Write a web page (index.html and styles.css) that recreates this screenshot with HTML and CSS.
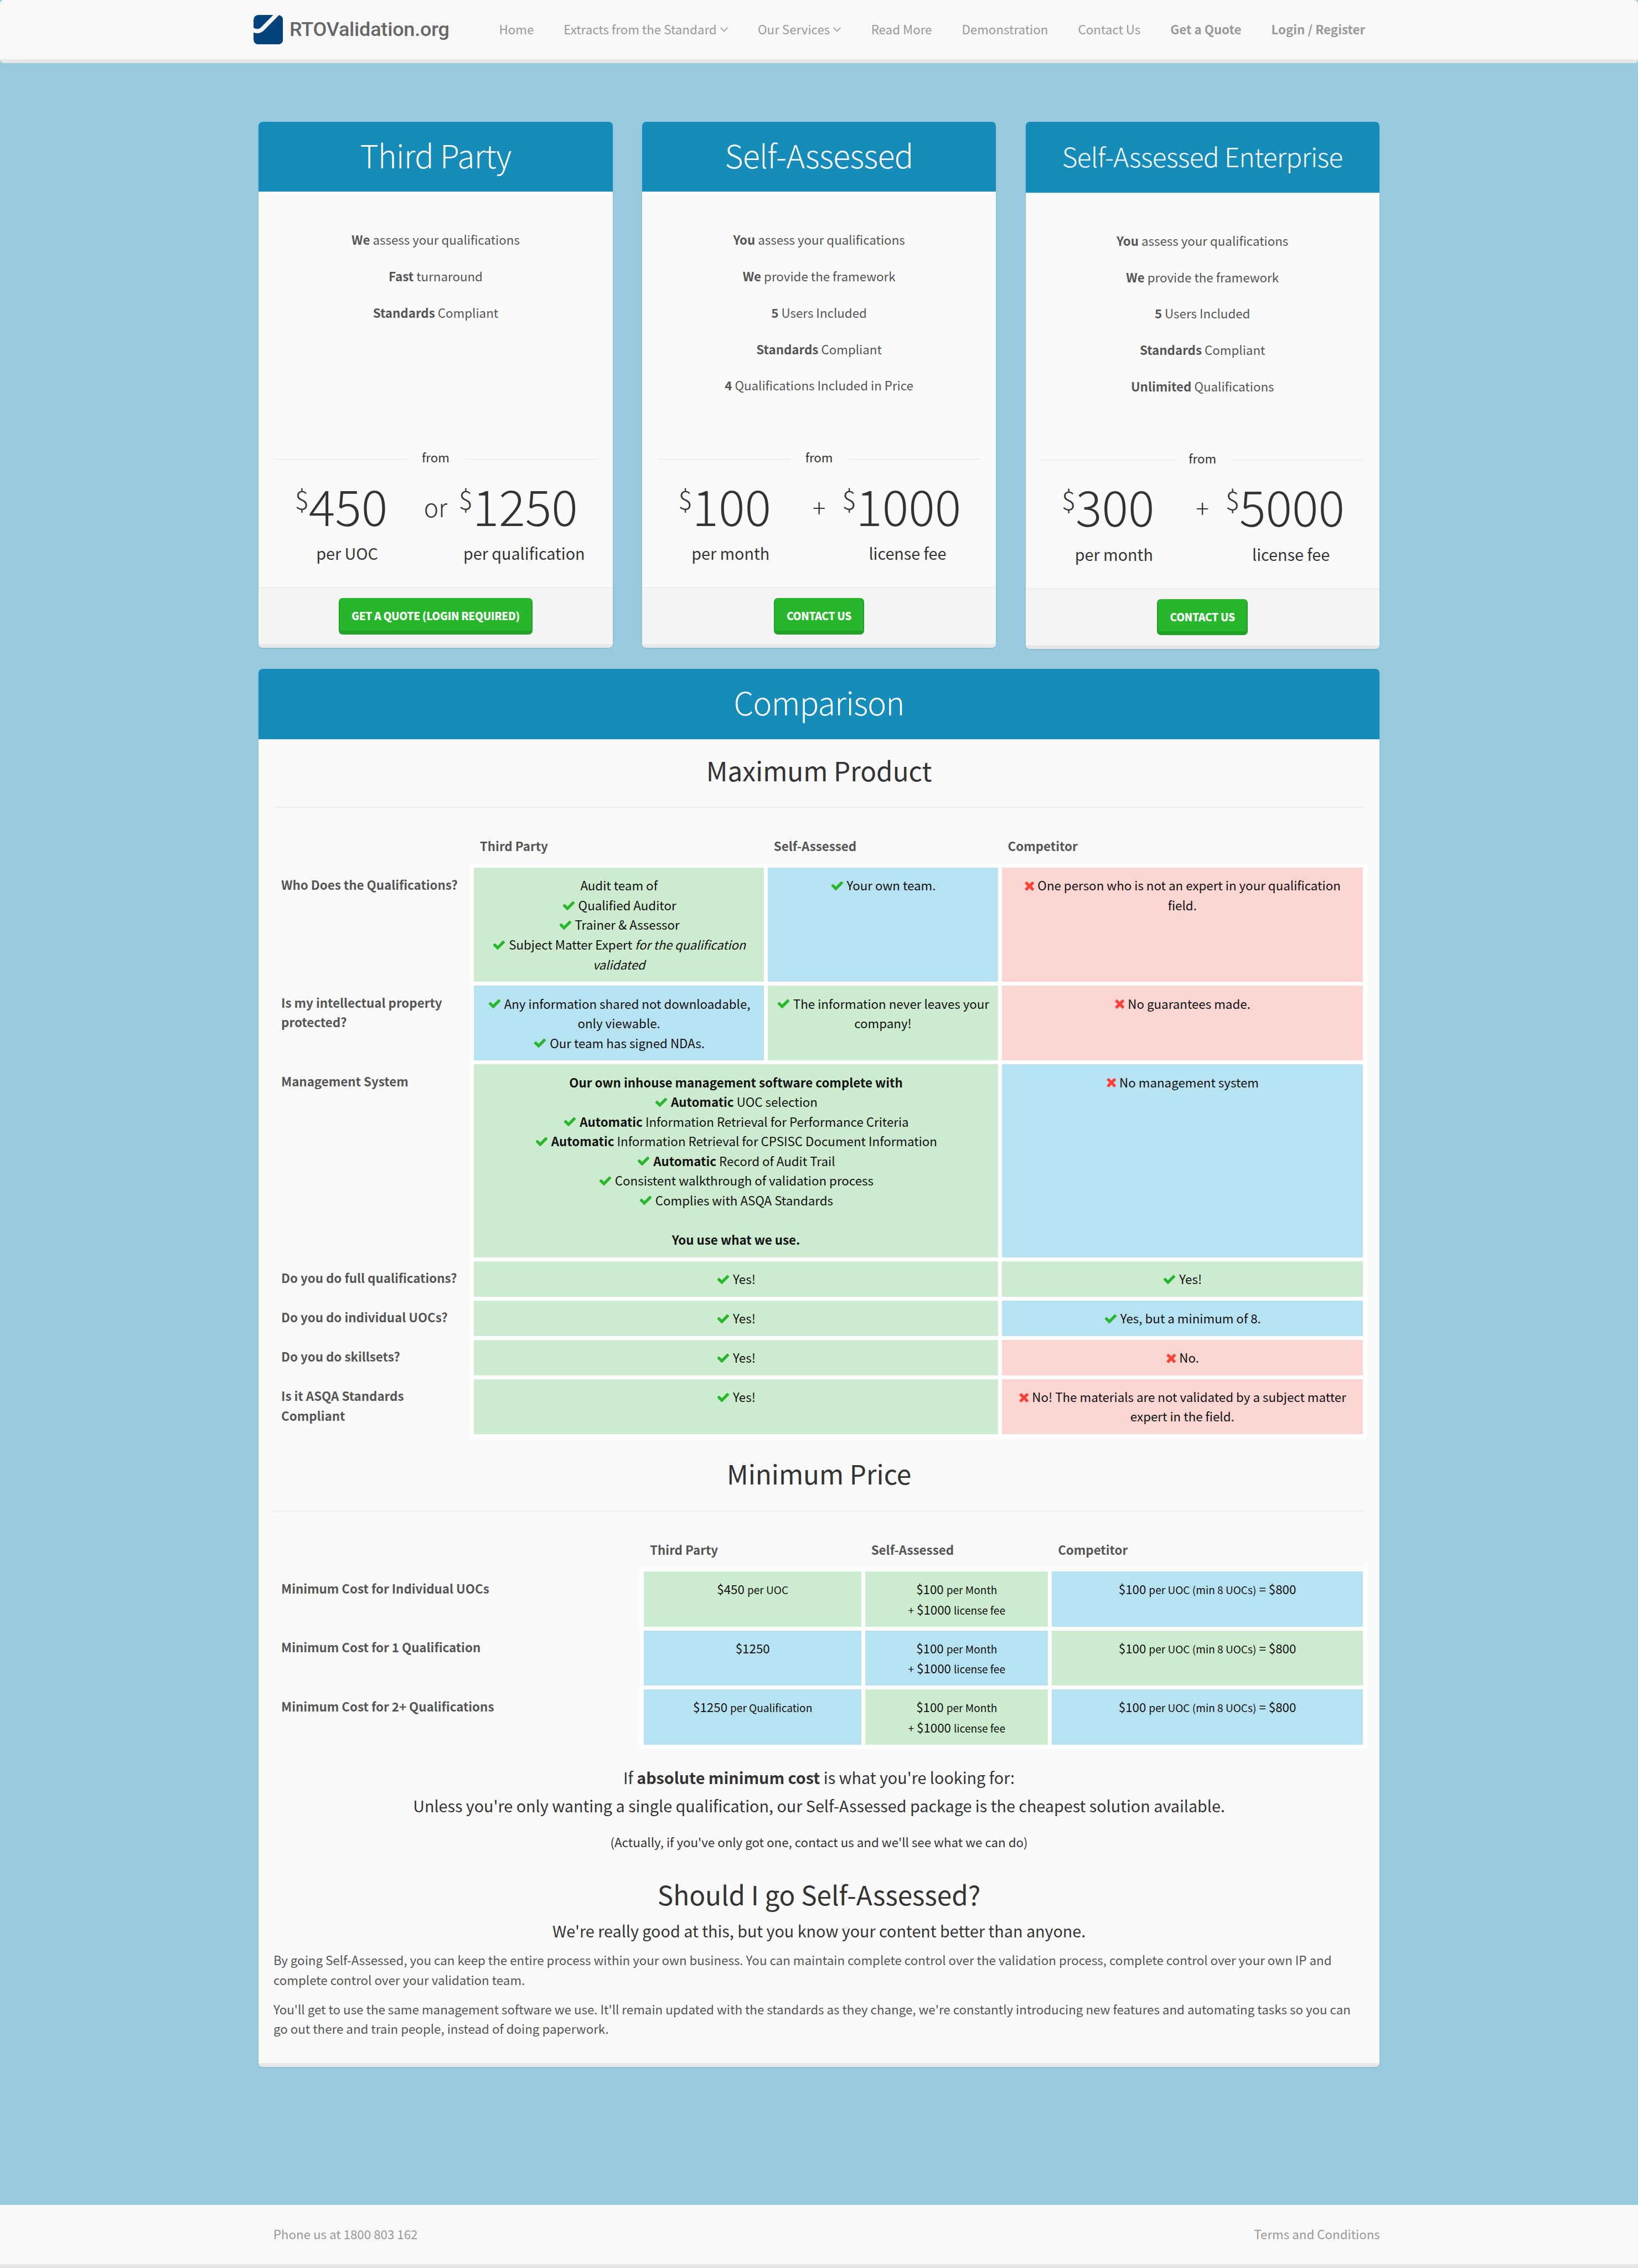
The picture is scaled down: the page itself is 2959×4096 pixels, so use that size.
FILE: index.html
```html
<!DOCTYPE html>
<html lang="en">
<head>
<meta charset="utf-8">
<title>RTOValidation.org</title>
<link rel="stylesheet" href="styles.css">
</head>
<body>
<svg class="defs" aria-hidden="true">
  <symbol id="check" viewBox="0 0 1792 1792"><path d="M1671 566q0 40-28 68l-724 724-136 136q-28 28-68 28t-68-28l-136-136-362-362q-28-28-28-68t28-68l136-136q28-28 68-28t68 28l294 295 656-657q28-28 68-28t68 28l136 136q28 28 28 68z"/></symbol>
  <symbol id="times" viewBox="192 0 1408 1792"><path d="M1490 1322q0 40-28 68l-136 136q-28 28-68 28t-68-28l-294-294-294 294q-28 28-68 28t-68-28l-136-136q-28-28-28-68t28-68l294-294-294-294q-28-28-28-68t28-68l136-136q28-28 68-28t68 28l294 294 294-294q28-28 68-28t68 28l136 136q28 28 28 68t-28 68l-294 294 294 294q28 28 28 68z"/></symbol>
  <symbol id="caret" viewBox="0 0 16 10"><path d="M1 1l7 7.5L15 1" fill="none" stroke="currentColor" stroke-width="1.8"/></symbol>
</svg>

<header class="navbar">
  <a class="brand">
    <svg class="logo" viewBox="0 0 60 60"><rect width="60" height="60" rx="10" fill="#04437b"/><path d="M-3 29.500Q9 36.500 17.500 29L49-3" fill="none" stroke="#f8f8f8" stroke-width="8.500"/></svg>
    <span class="wordmark">RTOValidation.org</span>
  </a>
  <nav class="menu">
    <a>Home</a>
    <a>Extracts from the Standard<svg class="caret"><use href="#caret"/></svg></a>
    <a>Our Services<svg class="caret"><use href="#caret"/></svg></a>
    <a>Read More</a>
    <a>Demonstration</a>
    <a>Contact Us</a>
    <a><b>Get a Quote</b></a>
    <a><b>Login / Register</b></a>
  </nav>
</header>

<main class="container">
  <section class="plans">
    <article class="panel plan">
      <h1 class="panel-title">Third Party</h1>
      <ul class="features">
        <li><b>We</b> assess your qualifications</li>
        <li><b>Fast</b> turnaround</li>
        <li><b>Standards</b> Compliant</li>
      </ul>
      <div class="from">from</div>
      <div class="prices">
        <div class="price left"><span class="cur">$</span>450</div>
        <div class="joiner">or</div>
        <div class="price right"><span class="cur">$</span>1250</div>
        <div class="unit left">per UOC</div>
        <div class="unit right">per qualification</div>
      </div>
      <footer class="panel-footer"><a class="btn">Get a Quote (Login Required)</a></footer>
    </article>
    <article class="panel plan">
      <h1 class="panel-title">Self-Assessed</h1>
      <ul class="features">
        <li><b>You</b> assess your qualifications</li>
        <li><b>We</b> provide the framework</li>
        <li><b>5</b> Users Included</li>
        <li><b>Standards</b> Compliant</li>
        <li><b>4</b> Qualifications Included in Price</li>
      </ul>
      <div class="from">from</div>
      <div class="prices">
        <div class="price left"><span class="cur">$</span>100</div>
        <div class="joiner">+</div>
        <div class="price right"><span class="cur">$</span>1000</div>
        <div class="unit left">per month</div>
        <div class="unit right">license fee</div>
      </div>
      <footer class="panel-footer"><a class="btn">Contact Us</a></footer>
    </article>
    <article class="panel plan">
      <h2 class="panel-title compact">Self-Assessed Enterprise</h2>
      <ul class="features">
        <li><b>You</b> assess your qualifications</li>
        <li><b>We</b> provide the framework</li>
        <li><b>5</b> Users Included</li>
        <li><b>Standards</b> Compliant</li>
        <li><b>Unlimited</b> Qualifications</li>
      </ul>
      <div class="from">from</div>
      <div class="prices">
        <div class="price left"><span class="cur">$</span>300</div>
        <div class="joiner">+</div>
        <div class="price right"><span class="cur">$</span>5000</div>
        <div class="unit left">per month</div>
        <div class="unit right">license fee</div>
      </div>
      <footer class="panel-footer"><a class="btn">Contact Us</a></footer>
    </article>
  </section>

  <section class="panel comparison">
    <h1 class="panel-title ruled">Comparison</h1>
    <div class="panel-body">
      <h2 class="heading">Maximum Product</h2>
      <hr>
      <table class="compare product">
        <colgroup><col class="c1"><col class="c2"><col class="c3"><col class="c4"></colgroup>
        <tr class="lines-1"><th></th><th>Third Party</th><th>Self-Assessed</th><th>Competitor</th></tr>
        <tr class="lines-5">
          <th>Who Does the Qualifications?</th>
          <td class="good">Audit team of<br><svg class="ok"><use href="#check"/></svg> Qualified Auditor<br><svg class="ok"><use href="#check"/></svg> Trainer &amp; Assessor<br><svg class="ok"><use href="#check"/></svg> Subject Matter Expert <i>for the qualification<br>validated</i></td>
          <td class="fair"><svg class="ok"><use href="#check"/></svg> Your own team.</td>
          <td class="poor"><svg class="no"><use href="#times"/></svg> One person who is not an expert in your qualification<br>field.</td>
        </tr>
        <tr class="lines-3">
          <th>Is my intellectual property<br>protected?</th>
          <td class="fair"><svg class="ok"><use href="#check"/></svg> Any information shared not downloadable,<br>only viewable.<br><svg class="ok"><use href="#check"/></svg> Our team has signed NDAs.</td>
          <td class="good"><svg class="ok"><use href="#check"/></svg> The information never leaves your<br>company!</td>
          <td class="poor"><svg class="no"><use href="#times"/></svg> No guarantees made.</td>
        </tr>
        <tr class="lines-9">
          <th>Management System</th>
          <td class="good" colspan="2"><b>Our own inhouse management software complete with</b><br><svg class="ok"><use href="#check"/></svg> <b>Automatic</b> UOC selection<br><svg class="ok"><use href="#check"/></svg> <b>Automatic</b> Information Retrieval for Performance Criteria<br><svg class="ok"><use href="#check"/></svg> <b>Automatic</b> Information Retrieval for CPSISC Document Information<br><svg class="ok"><use href="#check"/></svg> <b>Automatic</b> Record of Audit Trail<br><svg class="ok"><use href="#check"/></svg> Consistent walkthrough of validation process<br><svg class="ok"><use href="#check"/></svg> Complies with ASQA Standards<br><br><b>You use what we use.</b></td>
          <td class="fair"><svg class="no"><use href="#times"/></svg> No management system</td>
        </tr>
        <tr class="lines-1">
          <th>Do you do full qualifications?</th>
          <td class="good" colspan="2"><svg class="ok"><use href="#check"/></svg> Yes!</td>
          <td class="good"><svg class="ok"><use href="#check"/></svg> Yes!</td>
        </tr>
        <tr class="lines-1">
          <th>Do you do individual UOCs?</th>
          <td class="good" colspan="2"><svg class="ok"><use href="#check"/></svg> Yes!</td>
          <td class="fair"><svg class="ok"><use href="#check"/></svg> Yes, but a minimum of 8.</td>
        </tr>
        <tr class="lines-1">
          <th>Do you do skillsets?</th>
          <td class="good" colspan="2"><svg class="ok"><use href="#check"/></svg> Yes!</td>
          <td class="poor"><svg class="no"><use href="#times"/></svg> No.</td>
        </tr>
        <tr class="lines-2">
          <th>Is it ASQA Standards<br>Compliant</th>
          <td class="good" colspan="2"><svg class="ok"><use href="#check"/></svg> Yes!</td>
          <td class="poor"><svg class="no"><use href="#times"/></svg> No! The materials are not validated by a subject matter<br>expert in the field.</td>
        </tr>
      </table>

      <h2 class="heading second">Minimum Price</h2>
      <hr>
      <table class="compare price-table">
        <colgroup><col class="c1"><col class="c2"><col class="c3"><col class="c4"></colgroup>
        <tr class="lines-1"><th></th><th>Third Party</th><th>Self-Assessed</th><th>Competitor</th></tr>
        <tr class="lines-2">
          <th>Minimum Cost for Individual UOCs</th>
          <td class="good">$450 <small>per UOC</small></td>
          <td class="good">$100 <small>per Month</small><br><small>+</small> $1000 <small>license fee</small></td>
          <td class="fair">$100 <small>per UOC (min 8 UOCs)</small> = $800</td>
        </tr>
        <tr class="lines-2">
          <th>Minimum Cost for 1 Qualification</th>
          <td class="fair">$1250</td>
          <td class="fair">$100 <small>per Month</small><br><small>+</small> $1000 <small>license fee</small></td>
          <td class="good">$100 <small>per UOC (min 8 UOCs)</small> = $800</td>
        </tr>
        <tr class="lines-2">
          <th>Minimum Cost for 2+ Qualifications</th>
          <td class="fair">$1250 <small>per Qualification</small></td>
          <td class="good">$100 <small>per Month</small><br><small>+</small> $1000 <small>license fee</small></td>
          <td class="fair">$100 <small>per UOC (min 8 UOCs)</small> = $800</td>
        </tr>
      </table>

      <p class="lead">If <b>absolute minimum cost</b> is what you're looking for:<br>Unless you're only wanting a single qualification, our Self-Assessed package is the cheapest solution available.</p>
      <p class="aside">(Actually, if you've only got one, contact us and we'll see what we can do)</p>
      <h2 class="heading third">Should I go Self-Assessed?</h2>
      <h4 class="sub">We're really good at this, but you know your content better than anyone.</h4>
      <p class="text">By going Self-Assessed, you can keep the entire process within your own business. You can maintain complete control over the validation process, complete control over your own IP and<br>complete control over your validation team.</p>
      <p class="text">You'll get to use the same management software we use. It'll remain updated with the standards as they change, we're constantly introducing new features and automating tasks so you can<br>go out there and train people, instead of doing paperwork.</p>
    </div>
  </section>
</main>

<footer class="page-footer">
  <span>Phone us at 1800 803 162</span>
  <a>Terms and Conditions</a>
</footer>
</body>
</html>
```
FILE: styles.css
```css
html { font-size: 88.8px; }
* { box-sizing: border-box; }
body {
  margin: 0;
  min-height: 4096px;
  display: flex;
  flex-direction: column;
  background: #98cbe0;
  color: #555;
  font-family: "Noto Sans CJK SC", "Open Sans", sans-serif;
  font-size: .2515rem;
  line-height: .4rem;
  white-space: nowrap;
}
h1, h2, h4, p, ul { margin: 0; padding: 0; font-weight: 400; }
b { font-weight: 700; }
.defs { display: none; }

.navbar {
  display: flex;
  height: 1.28rem;
  padding: 0 5.55rem 0 5.16rem;
  background: #f8f8f8;
  border-bottom: .08rem solid #e7e7e7;
  border-radius: .08rem;
}
.brand { display: flex; padding-top: .3rem; }
.logo { width: .6rem; height: .6rem; }
.wordmark {
  margin-left: .13rem;
  color: #666;
  font: 500 .405rem/.6rem Roboto, sans-serif;
  letter-spacing: -.002rem;
}
.menu { display: flex; gap: .608rem; margin-left: auto; padding-top: .39rem; color: #999; }
.caret { width: .16rem; height: .1rem; margin-left: .07rem; vertical-align: .045rem; }

.container { width: 22.8rem; margin: 1.2rem 0 0 5.262rem; }
.plans { display: grid; grid-template-columns: repeat(3, 7.2rem); gap: .6rem; align-items: start; }
.panel {
  background: #fafafa;
  border-bottom: .08rem solid #e7e7e7;
  border-radius: .08rem;
  box-shadow: 0 1px 3px rgba(0, 0, 0, .12);
}
.panel-title {
  height: 1.42rem;
  background: #158cba;
  border-radius: .08rem .08rem 0 0;
  color: #fff;
  font-size: .645rem;
  font-weight: 300;
  letter-spacing: -.013em;
  line-height: 1.33rem;
  text-align: center;
}
.panel-title.compact { height: 1.46rem; font-size: .537rem; line-height: 1.39rem; border-bottom: .023rem solid #eee; }
.panel-title.ruled { height: 1.45rem; border-bottom: .023rem solid #eee; }
.features { height: 5.2rem; padding-top: .61rem; list-style: none; text-align: center; line-height: .74rem; }
.compact + .features { height: 5.18rem; padding-top: .585rem; }
.from { display: flex; gap: .29rem; margin: 0 .3rem; color: #333; }
.from::before, .from::after { content: ""; flex: 1; height: 2px; margin-top: .23rem; background: #eee; }
.prices {
  display: grid;
  grid-template-columns: 1fr 1fr;
  grid-template-rows: 1.37rem .89rem;
  margin-top: .18rem;
  color: #333;
  text-align: center;
}
.price { grid-row: 1; padding-right: .24rem; font-size: 1rem; font-weight: 300; line-height: 1.18rem; }
.cur { font-size: .53rem; line-height: 0; vertical-align: .34rem; }
.joiner { grid-area: 1 / 1 / 2 / 3; font-size: .5rem; font-weight: 300; line-height: 1.24rem; }
.unit { grid-row: 2; font-size: .3235rem; }
.left { grid-column: 1; }
.right { grid-column: 2; }
.panel-footer {
  height: 1.16rem;
  padding-top: .2rem;
  background: #f5f5f5;
  border-top: .023rem solid #eee;
  text-align: center;
}
.btn {
  display: inline-block;
  height: .74rem;
  padding: 0 .24rem;
  background: #28b62c;
  border: solid #23a127;
  border-width: 0 .023rem .08rem;
  border-radius: .08rem;
  color: #fff;
  font-size: .215rem;
  font-weight: 900;
  letter-spacing: -.004rem;
  line-height: .71rem;
  text-transform: uppercase;
}

.comparison { height: 28.43rem; margin-top: .41rem; }
.panel-body { padding: .275rem .3rem 0; }
.heading { color: #333; font-size: .537rem; line-height: .66rem; text-align: center; }
.heading.second { margin-top: .395rem; }
.heading.third { margin-top: .535rem; }
hr { height: 2px; margin: .42rem 0 .375rem; border: 0; background: #eee; }

.compare { width: 22.2rem; table-layout: fixed; border-collapse: collapse; }
.product .c1 { width: 4.04rem; }
.product .c2 { width: 5.98rem; }
.product .c3 { width: 4.76rem; }
.product .c4 { width: 7.42rem; }
.price-table .c1 { width: 7.5rem; }
.price-table .c2 { width: 4.5rem; }
.price-table .c3 { width: 3.8rem; }
.price-table .c4 { width: 6.4rem; }
.lines-1 { height: .8rem; }
.lines-2 { height: 1.2rem; }
.lines-3 { height: 1.6rem; }
.lines-5 { height: 2.4rem; }
.lines-9 { height: 4rem; }
.compare tr:nth-child(odd) { background: #f9f9f9; }
.compare th { padding: .18rem .16rem 0; text-align: left; vertical-align: top; font-weight: 700; }
.compare tr:first-child th { padding-top: .2rem; }
.compare td { padding: .16rem .1rem 0; border: .08rem solid #fff; color: #111; text-align: center; vertical-align: top; }
.compare i { font-size: .246rem; }
.compare small { font-size: .215rem; }
.good { background: #cdeccf; }
.fair { background: #b7e2f2; }
.poor { background: #fad5d1; }
.ok, .no { height: .28rem; vertical-align: -.04rem; }
.ok { width: .28rem; fill: #28b62c; }
.no { width: .22rem; fill: #ff4136; }

.lead { margin-top: .295rem; color: #333; font-size: .3235rem; line-height: .58rem; text-align: center; }
.aside { margin-top: .25rem; color: #333; text-align: center; }
.sub { margin-top: .21rem; color: #333; font-size: .3235rem; text-align: center; }
.text { margin-top: .195rem; }

.page-footer {
  display: flex;
  justify-content: space-between;
  height: 1.28rem;
  margin-top: auto;
  padding: .39rem 5.25rem 0 5.56rem;
  background: #f8f8f8;
  border-bottom: .08rem solid #e7e7e7;
  color: #999;
}
```
